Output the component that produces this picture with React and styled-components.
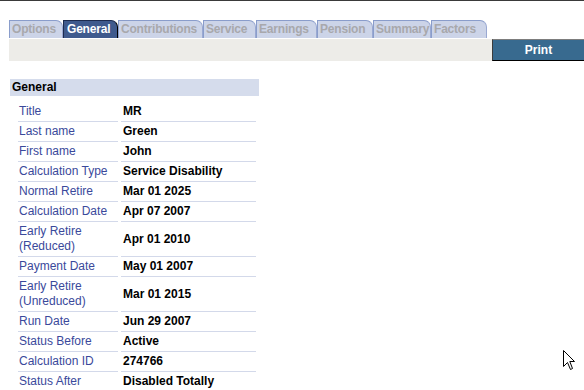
import React from 'react';
import styled, { createGlobalStyle } from 'styled-components';

const GlobalStyle = createGlobalStyle`
  html, body {
    margin: 0;
    padding: 0;
    background: #ffffff;
    font-family: "Liberation Sans", Arial, sans-serif;
  }
`;

const Page = styled.div`
  position: relative;
  width: 584px;
  height: 389px;
  border-top: 1px solid #3a3a3a;
  padding: 19px 0 0 9px;
  box-sizing: border-box;
  overflow: hidden;
`;

const TabStrip = styled.div`
  display: flex;
  align-items: flex-end;
  height: 18px;
`;

const Tab = styled.div`
  width: ${props => props.w}px;
  height: 18px;
  box-sizing: border-box;
  padding: 0 0 0 ${props => props.active ? 3 : 2}px;
  border: 1px solid ${props => props.active ? '#1d2b4f' : '#8a9dcb'};
  border-right-color: ${props => props.active ? '#000000' : '#9aa9d2'};
  border-bottom: none;
  border-top-right-radius: 7px;
  background: ${props => props.active ? '#3f5a8d' : '#ccd4e8'};
  color: ${props => props.active ? '#ffffff' : '#a8a8ac'};
  font-size: 12px;
  font-weight: bold;
  line-height: 17px;
  letter-spacing: -0.2px;
  white-space: nowrap;
  overflow: hidden;
`;

const Toolbar = styled.div`
  display: flex;
  justify-content: flex-end;
  height: 22px;
  margin-top: 1px;
  background: #edece8;
`;

const PrintButton = styled.button`
  width: 92px;
  height: 22px;
  padding: 0;
  border: none;
  border-top: 1px solid #7d7d7d;
  border-left: 1px solid #3c3c3c;
  border-bottom: 1px solid #000000;
  background: #386a8f;
  color: #ffffff;
  font-family: "Liberation Sans", Arial, sans-serif;
  font-size: 12px;
  font-weight: bold;
  cursor: pointer;
`;

const Section = styled.div`
  width: 249px;
  margin: 18px 0 0 1px;
`;

const SectionHeader = styled.div`
  height: 17px;
  padding-left: 2px;
  background: #d5dcec;
  color: #000000;
  font-size: 12px;
  font-weight: bold;
  line-height: 17px;
`;

const Grid = styled.div`
  display: grid;
  grid-template-columns: 100px 135px;
  column-gap: 3px;
  padding: 6px 3px 0 8px;
`;

const Label = styled.div`
  padding: 2px 0 2px 1px;
  border-bottom: 1px solid #d3d9ea;
  color: #3a499b;
  font-size: 12px;
  line-height: 15px;
`;

const Value = styled.div`
  display: flex;
  align-items: center;
  padding: 2px 0 2px 2px;
  border-bottom: 1px solid #d3d9ea;
  color: #000000;
  font-size: 12px;
  font-weight: bold;
  line-height: 15px;
`;

const Pointer = styled.svg`
  position: absolute;
  left: 563px;
  top: 349px;
`;

const tabs = [
  { name: 'Options', w: 54 },
  { name: 'General', w: 55, active: true },
  { name: 'Contributions', w: 85 },
  { name: 'Service', w: 53 },
  { name: 'Earnings', w: 61 },
  { name: 'Pension', w: 56 },
  { name: 'Summary', w: 58 },
  { name: 'Factors', w: 56 },
];

const rows = [
  ['Title', 'MR'],
  ['Last name', 'Green'],
  ['First name', 'John'],
  ['Calculation Type', 'Service Disability'],
  ['Normal Retire', 'Mar 01 2025'],
  ['Calculation Date', 'Apr 07 2007'],
  ['Early Retire (Reduced)', 'Apr 01 2010'],
  ['Payment Date', 'May 01 2007'],
  ['Early Retire (Unreduced)', 'Mar 01 2015'],
  ['Run Date', 'Jun 29 2007'],
  ['Status Before', 'Active'],
  ['Calculation ID', '274766'],
  ['Status After', 'Disabled Totally'],
];

export default function App() {
  return (
    <>
      <GlobalStyle />
      <Page>
        <TabStrip>
          {tabs.map(t => (
            <Tab key={t.name} w={t.w} active={t.active}>{t.name}</Tab>
          ))}
        </TabStrip>
        <Toolbar>
          <PrintButton>Print</PrintButton>
        </Toolbar>
        <Section>
          <SectionHeader>General</SectionHeader>
          <Grid>
            {rows.map(([label, value]) => (
              <React.Fragment key={label}>
                <Label>{label}</Label>
                <Value>{value}</Value>
              </React.Fragment>
            ))}
          </Grid>
        </Section>
        <Pointer width="13" height="22" viewBox="0 0 13 22">
          <path d="M0.5 0.5 L0.5 16.5 L4.5 12.5 L7.5 19.5 L9.5 18.5 L6.8 11.5 L11.5 11.5 Z" fill="#ffffff" stroke="#000000" strokeWidth="1" />
        </Pointer>
      </Page>
    </>
  );
}
